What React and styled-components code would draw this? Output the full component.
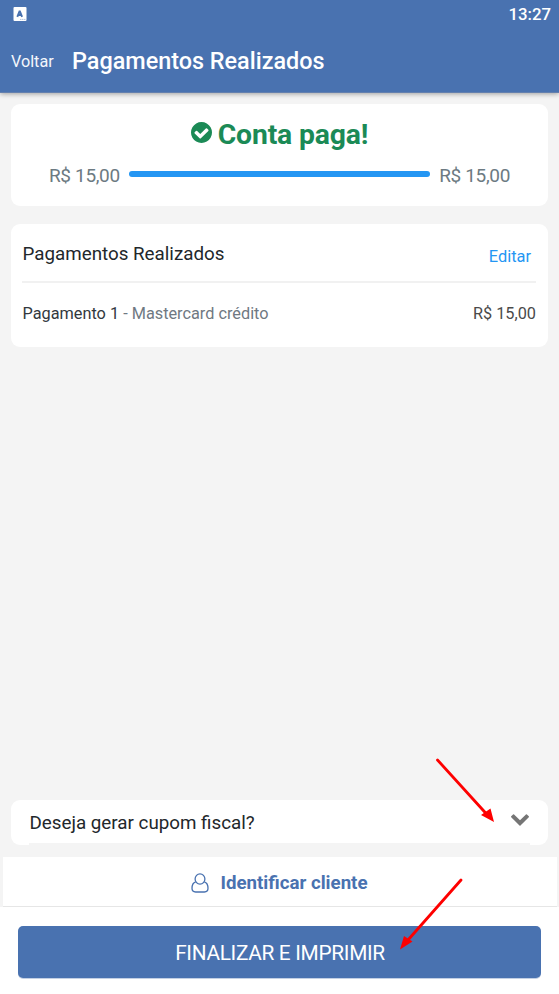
import React from 'react'
import styled, { createGlobalStyle } from 'styled-components';

const GlobalStyle = createGlobalStyle`
  * {
    box-sizing: border-box;
  }
  body {
    margin: 0;
    background: #f4f4f4;
    font-family: Roboto, "Liberation Sans", sans-serif;
  }
`

const Screen = styled.div`
  position: relative;
  display: flex;
  flex-direction: column;
  width: 559px;
  height: 994px;
  overflow: hidden;
  background: #f4f4f4;
`

const Header = styled.header`
  height: 93px;
  flex: none;
  color: white;
  background: #4972b0;
  border-bottom: 1px solid #6480ae;
  box-shadow: 0 1px 5px rgba(0, 0, 0, 0.35);
`

const StatusBar = styled.div`
  display: flex;
  justify-content: space-between;
  align-items: center;
  height: 28px;
  padding: 0 8px 0 13px;
`

const Clock = styled.span`
  font-size: 16.8px;
  font-weight: 500;
  line-height: 20px;
`

const NavBar = styled.div`
  display: flex;
  align-items: center;
  height: 64px;
  padding: 2px 11px 0;
`

const Back = styled.a`
  width: 61px;
  font-size: 16.2px;
  color: #f4f7fc;
`

const Title = styled.h1`
  margin: 0;
  font-size: 23.4px;
  font-weight: 500;
`

const Content = styled.main`
  flex: 1;
  display: flex;
  flex-direction: column;
  padding: 11px 11px 12px;
`

const Card = styled.section`
  background: white;
  border-radius: 9px;
`

const StatusCard = styled(Card)`
  height: 102px;
  padding-top: 12px;
  margin-bottom: 18px;
`

const Paid = styled.h2`
  display: flex;
  justify-content: center;
  align-items: center;
  gap: 6px;
  height: 36px;
  margin: 0;
  font-size: 28.3px;
  font-weight: 700;
  letter-spacing: -0.15px;
  color: #1b8a56;

  svg {
    width: 21px;
    height: 21px;
    margin-top: -4px;
  }
`

const Progress = styled.div`
  display: flex;
  align-items: center;
  gap: 9px;
  height: 24px;
  margin-top: 11px;
  padding: 0 38px;
  font-size: 19px;
  letter-spacing: -0.35px;
  color: #6c7a82;
`

const Bar = styled.div`
  flex: 1;
  height: 6px;
  margin-top: -3px;
  border-radius: 3px;
  background: #2496f3;
`

const ListCard = styled(Card)`
  height: 123px;
  padding: 0 12px 0 11px;
`

const ListHead = styled.div`
  display: flex;
  justify-content: space-between;
  align-items: center;
  height: 59px;
  padding: 2px 0 0 0.5px;
  border-bottom: 2px solid #f1f1f1;
  font-size: 18.8px;
  color: #22272b;
`

const Edit = styled.a`
  margin: 5px 5px 0 0;
  font-size: 16.4px;
  color: #2496f3;
`

const ListRow = styled.div`
  display: flex;
  justify-content: space-between;
  align-items: center;
  height: 60px;
  padding-left: 0.5px;
  font-size: 16.3px;
  color: #32383e;
`

const Muted = styled.span`
  color: #6f7982;
`

const Amount = styled.span`
  color: #4a4a4a;
`

const Receipt = styled(Card)`
  display: flex;
  flex-direction: column;
  height: 45px;
  margin-top: auto;
  padding: 0 18px;
`

const ReceiptRow = styled.div`
  display: flex;
  justify-content: space-between;
  align-items: center;
  height: 43px;
  padding: 3px 0 0 0.5px;
  font-size: 18.8px;
  color: #22272b;

  svg {
    width: 18px;
    height: 12px;
    margin: -7px 1px 0 0;
  }
`

const ReceiptLine = styled.div`
  height: 2px;
  background: #f4f4f4;
`

const Customer = styled.button`
  display: flex;
  justify-content: center;
  align-items: center;
  gap: 11px;
  flex: none;
  height: 50px;
  margin: 0 2px 0 3px;
  padding: 2px 1px 0 0;
  border: none;
  border-bottom: 1px solid #e6e6e6;
  background: white;
  font-family: inherit;
  font-size: 18.7px;
  font-weight: 700;
  color: #4972b0;
`

const Footer = styled.footer`
  flex: none;
  height: 87px;
  padding: 19px 18px 0;
  background: white;
`

const Finish = styled.button`
  display: block;
  width: 100%;
  height: 52px;
  padding: 2px 0 0 1px;
  border: none;
  border-radius: 5px;
  box-shadow: 0 1px 0 #c3d0e4;
  background: #4972b0;
  font-family: inherit;
  font-size: 20.8px;
  letter-spacing: -0.3px;
  color: white;
`

// red pointers lie over the whole screen
const Pointers = styled.svg`
  position: absolute;
  top: 0;
  left: 0;
  pointer-events: none;
`

const AppIcon = () => (
  <svg width="14" height="14" viewBox="0 0 14 14">
    <rect x="0.5" width="13" height="14" rx="1" fill="#fff" />
    <path d="M4.3 9.8 6.7 3.9 9.1 9.8M5.1 8H8.3" fill="none" stroke="#4972b0" strokeWidth="1.9" strokeLinejoin="bevel" />
    <path d="M7 12.4H12.5" stroke="#b4c4de" strokeWidth="1" strokeDasharray="1.5 0.5" />
  </svg>
)

const CheckCircle = () => (
  <svg viewBox="128 128 1536 1536" fill="currentColor">
    <path d="M1412 734q0-28-18-46l-91-90q-19-19-45-19t-45 19l-408 407-226-226q-19-19-45-19t-45 19l-91 90q-18 18-18 46 0 27 18 45l362 362q19 19 45 19 27 0 46-19l543-543q18-18 18-45zm252 162q0 209-103 385.5t-279.5 279.5-385.5 103-385.5-103-279.5-279.5-103-385.5 103-385.5 279.5-279.5 385.5-103 385.5 103 279.5 279.5 103 385.5z" />
  </svg>
)

const ChevronDown = () => (
  <svg viewBox="90 533 1612 1035" fill="#757575">
    <path d="M1683 808l-742 741q-19 19-45 19t-45-19l-742-741q-19-19-19-45.5t19-45.5l166-165q19-19 45-19t45 19l531 531 531-531q19-19 45-19t45 19l166 165q19 19 19 45.5t-19 45.5z" />
  </svg>
)

const UserIcon = () => (
  <svg width="18" height="20" viewBox="0 0 18 20" fill="none" stroke="currentColor" strokeWidth="1.3">
    <ellipse cx="9" cy="6" rx="4.9" ry="5.2" />
    <path d="M4.7 8.8C2.2 9.5 1 12 1 15.3C1 17.6 2.5 19 4.6 19H13.4C15.5 19 17 17.6 17 15.3C17 12 15.8 9.5 13.3 8.8" />
  </svg>
)

const payments = [
  { name: 'Pagamento 1', method: 'Mastercard crédito', value: 'R$ 15,00' },
]

const App = () => {
  return (
    <>
      <GlobalStyle />
      <Screen>
        <Header>
          <StatusBar>
            <AppIcon />
            <Clock>13:27</Clock>
          </StatusBar>
          <NavBar>
            <Back>Voltar</Back>
            <Title>Pagamentos Realizados</Title>
          </NavBar>
        </Header>
        <Content>
          <StatusCard>
            <Paid><CheckCircle />Conta paga!</Paid>
            <Progress>
              <span>R$ 15,00</span>
              <Bar />
              <span>R$ 15,00</span>
            </Progress>
          </StatusCard>
          <ListCard>
            <ListHead>
              <span>Pagamentos Realizados</span>
              <Edit>Editar</Edit>
            </ListHead>
            {payments.map((p) => (
              <ListRow key={p.name}>
                <span>{p.name} <Muted>- {p.method}</Muted></span>
                <Amount>{p.value}</Amount>
              </ListRow>
            ))}
          </ListCard>
          <Receipt>
            <ReceiptRow>
              <span>Deseja gerar cupom fiscal?</span>
              <ChevronDown />
            </ReceiptRow>
            <ReceiptLine />
          </Receipt>
        </Content>
        <Customer><UserIcon />Identificar cliente</Customer>
        <Footer>
          <Finish>FINALIZAR E IMPRIMIR</Finish>
        </Footer>
        <Pointers width="559" height="994" viewBox="0 0 559 994" fill="#fe0000" stroke="#fe0000">
          <path d="M437.5 760 487 814.5M461 880 408 940" strokeWidth="2.8" strokeLinecap="round" />
          <path d="M494 822 481 815 490.5 808.5ZM400 949.5 404 936 412.5 941.5Z" stroke="none" />
        </Pointers>
      </Screen>
    </>
  )
}

export default App
